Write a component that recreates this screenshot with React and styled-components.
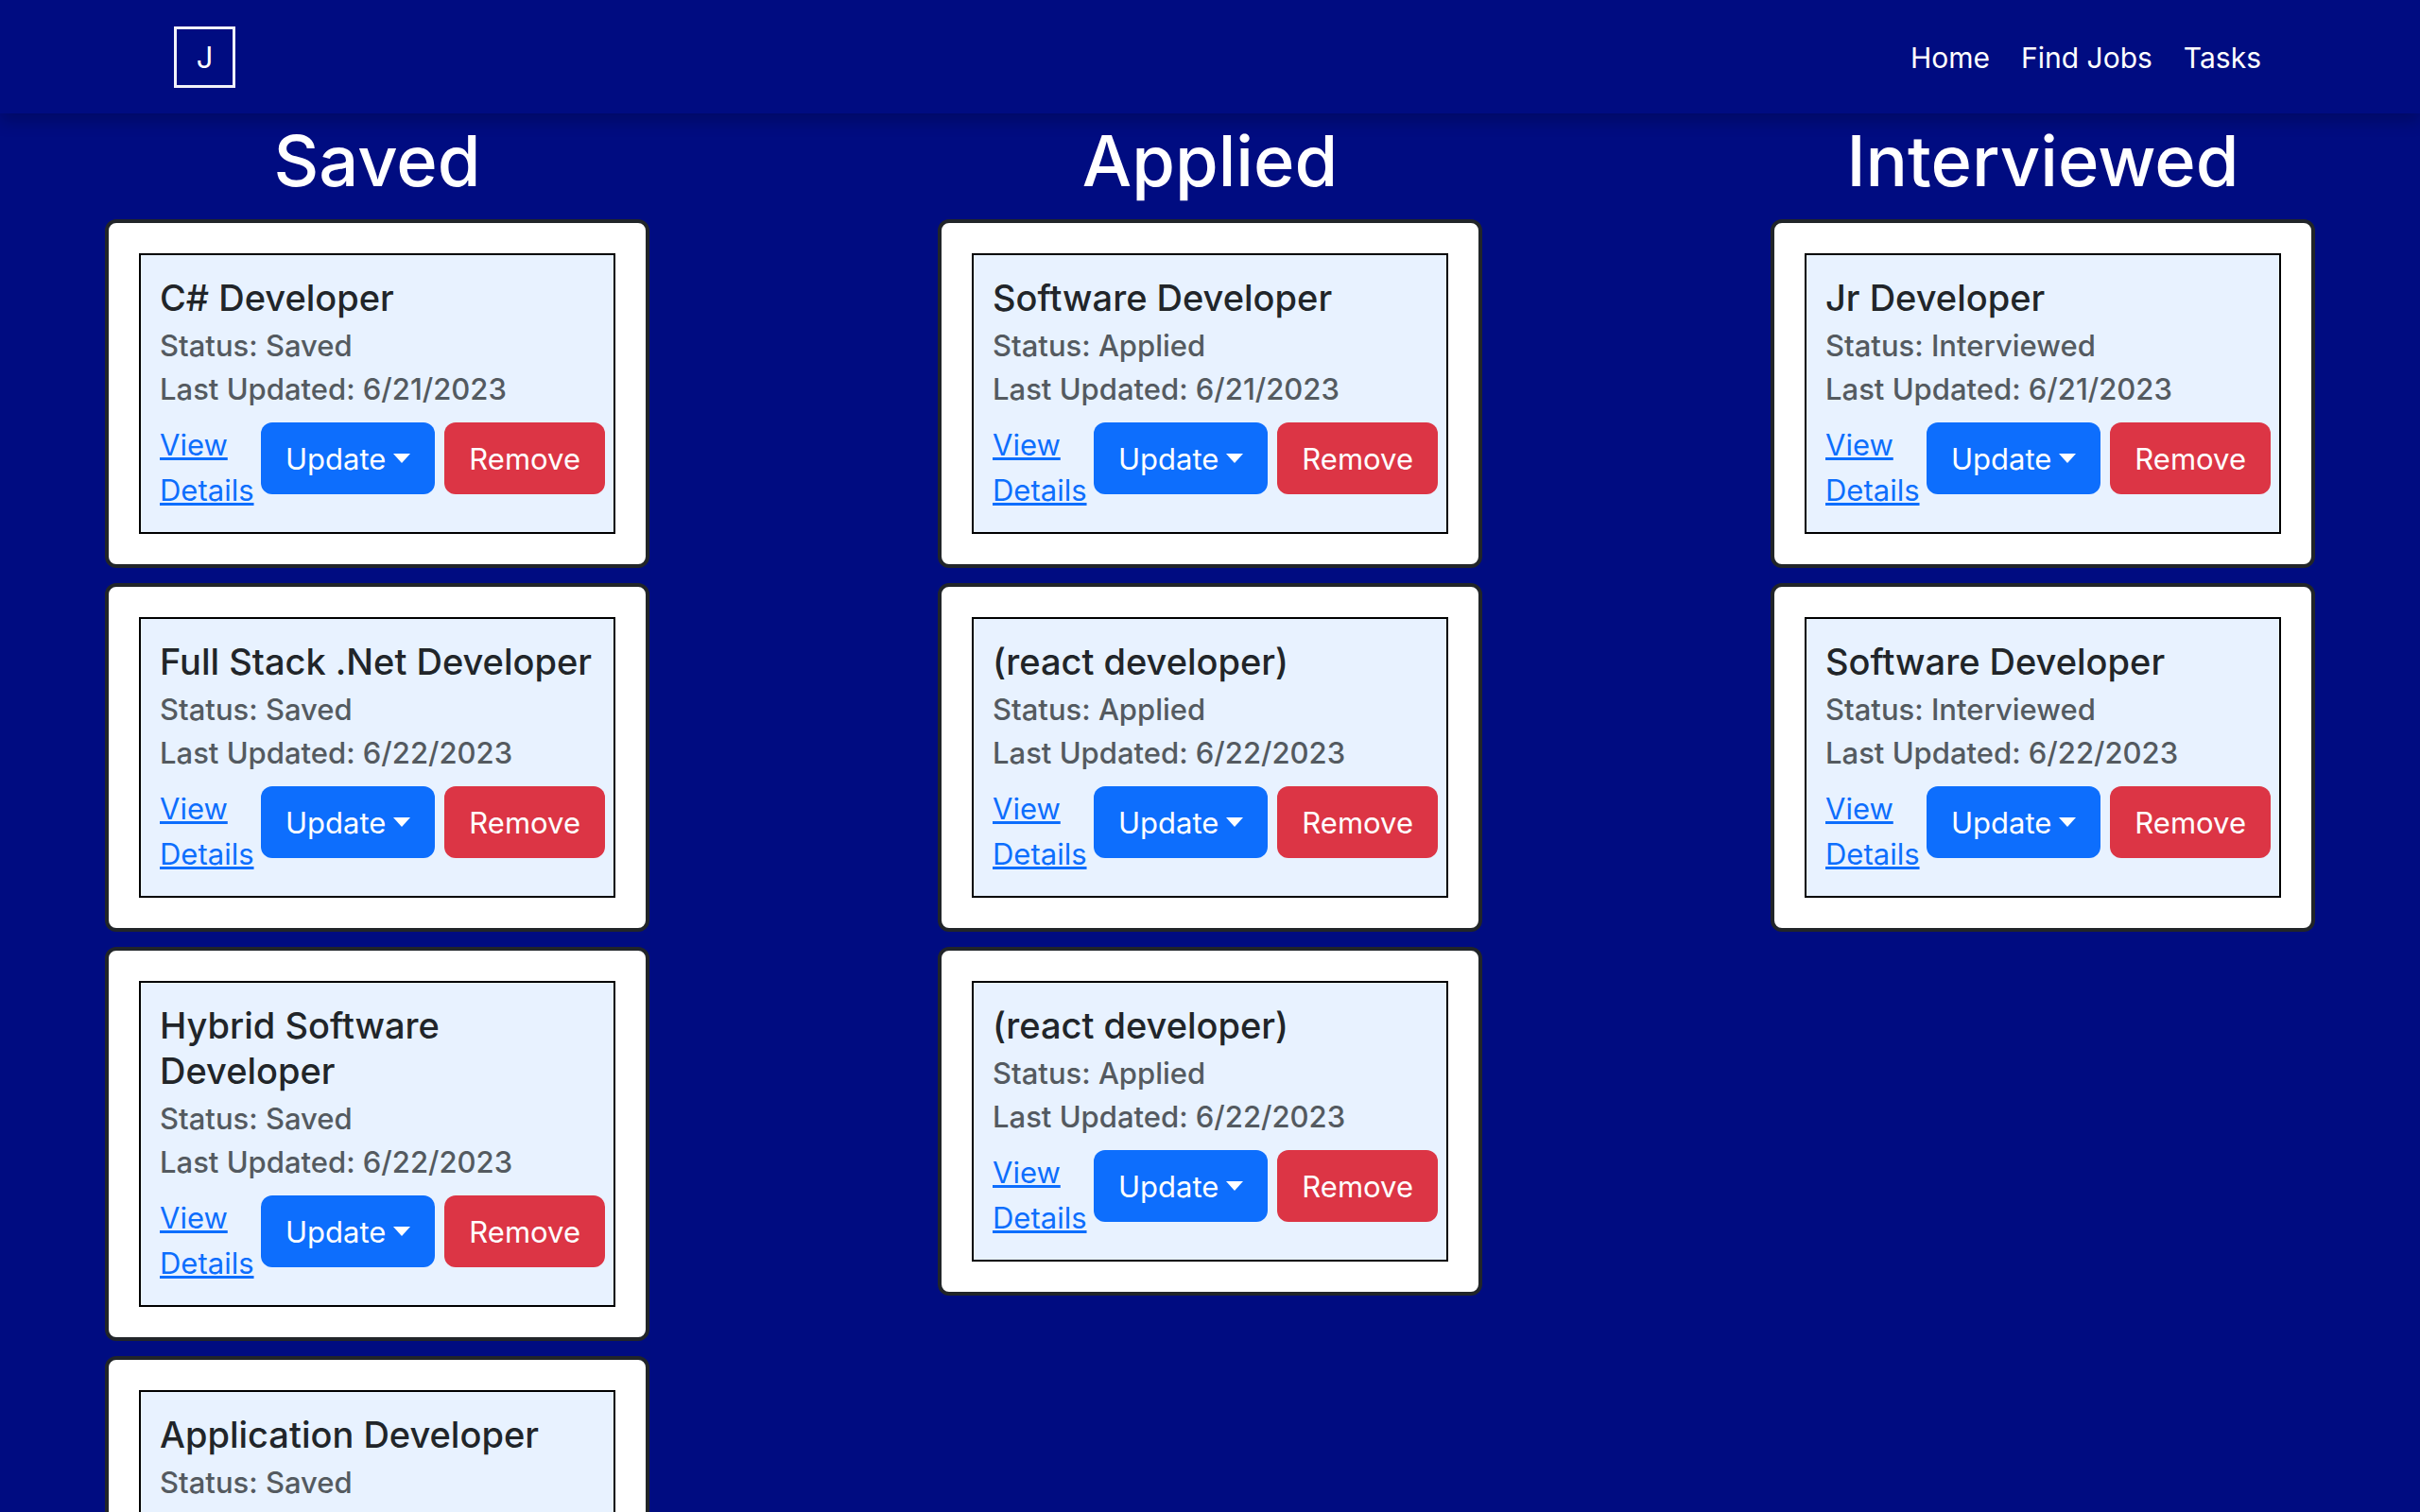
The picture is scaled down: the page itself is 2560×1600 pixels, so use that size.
import React from "react";
import styled, { createGlobalStyle } from "styled-components";

const GlobalStyle = createGlobalStyle`
  *, *::before, *::after { box-sizing: border-box; }
  html {
    background: #000c81;
    scrollbar-width: none;
  }
  body {
    margin: 0;
    font-family: Inter, Roboto, "Liberation Sans", sans-serif;
    font-size: 31px;
    line-height: 48px;
    color: #212529;
  }
`;

const Navbar = styled.header`
  display: flex;
  align-items: center;
  justify-content: space-between;
  height: 120px;
  padding: 0 168px 0 184px;
  background: #000c81;
  box-shadow: 0 8px 16px rgba(0, 0, 0, 0.22);
`;

const Logo = styled.a`
  display: flex;
  align-items: center;
  justify-content: center;
  width: 65px;
  height: 65px;
  padding-top: 2px;
  border: 3px solid #f1f2fa;
  color: #ffffff;
  text-decoration: none;
`;

const NavLinks = styled.nav`
  display: flex;
  gap: 33px;
  padding-top: 2px;
  font-size: 30px;
`;

const NavLink = styled.a`
  color: #ffffff;
  text-decoration: none;
`;

const Board = styled.main`
  display: flex;
  justify-content: space-between;
  align-items: flex-start;
  padding: 0 111px;
`;

const Column = styled.section`
  display: flex;
  flex-direction: column;
  gap: 16px;
  width: 576px;
`;

const ColumnTitle = styled.h1`
  margin: 0;
  padding-top: 4px;
  color: #ffffff;
  font-size: 74px;
  font-weight: 500;
  line-height: 92px;
  text-align: center;
`;

const Card = styled.article`
  padding: 32px;
  background: #ffffff;
  border: 4px solid #212529;
  border-radius: 12px;
`;

const CardBody = styled.div`
  padding: 21px 20px 20px;
  background: #e8f2ff;
  border: 2px solid #000000;
`;

const JobTitle = styled.h2`
  margin: 0 0 8px;
  font-size: 38px;
  font-weight: 500;
  line-height: 48px;
`;

const Meta = styled.div`
  display: grid;
  gap: 8px;
  color: #545a60;
  font-weight: 500;
  line-height: 38px;
`;

const MetaLine = styled.p`
  margin: 0;
`;

const Actions = styled.div`
  display: flex;
  align-items: flex-start;
  margin-top: 16px;
`;

const DetailsLink = styled.a`
  width: 107px;
  flex: none;
  color: #0d6efd;
`;

const Button = styled.button`
  display: flex;
  flex: none;
  align-items: center;
  gap: 8px;
  height: 76px;
  margin-right: 10px;
  padding: 2px 26px 0;
  border: 0;
  border-radius: 12px;
  background: ${(p) => (p.$danger ? "#dc3545" : "#0d6efd")};
  color: #ffffff;
  font: inherit;
`;

const Caret = styled.span`
  margin-bottom: 2px;
  border-top: 10px solid;
  border-right: 9px solid transparent;
  border-left: 9px solid transparent;
`;

const columns = [
  {
    status: "Saved",
    jobs: [
      { title: "C# Developer", updated: "6/21/2023" },
      { title: "Full Stack .Net Developer", updated: "6/22/2023" },
      { title: "Hybrid Software Developer", updated: "6/22/2023" },
      { title: "Application Developer", updated: "6/22/2023" },
    ],
  },
  {
    status: "Applied",
    jobs: [
      { title: "Software Developer", updated: "6/21/2023" },
      { title: "(react developer)", updated: "6/22/2023" },
      { title: "(react developer)", updated: "6/22/2023" },
    ],
  },
  {
    status: "Interviewed",
    jobs: [
      { title: "Jr Developer", updated: "6/21/2023" },
      { title: "Software Developer", updated: "6/22/2023" },
    ],
  },
];

function JobCard({ title, status, updated }) {
  return (
    <Card>
      <CardBody>
        <JobTitle>{title}</JobTitle>
        <Meta>
          <MetaLine>Status: {status}</MetaLine>
          <MetaLine>Last Updated: {updated}</MetaLine>
        </Meta>
        <Actions>
          <DetailsLink href="#details">View Details</DetailsLink>
          <Button type="button" aria-haspopup="menu">
            Update
            <Caret />
          </Button>
          <Button type="button" $danger>
            Remove
          </Button>
        </Actions>
      </CardBody>
    </Card>
  );
}

export default function App() {
  return (
    <>
      <GlobalStyle />
      <Navbar>
        <Logo href="#home">J</Logo>
        <NavLinks>
          <NavLink href="#home">Home</NavLink>
          <NavLink href="#jobs">Find Jobs</NavLink>
          <NavLink href="#tasks">Tasks</NavLink>
        </NavLinks>
      </Navbar>
      <Board>
        {columns.map((column) => (
          <Column key={column.status}>
            <ColumnTitle>{column.status}</ColumnTitle>
            {column.jobs.map((job, i) => (
              <JobCard key={i} status={column.status} {...job} />
            ))}
          </Column>
        ))}
      </Board>
    </>
  );
}
